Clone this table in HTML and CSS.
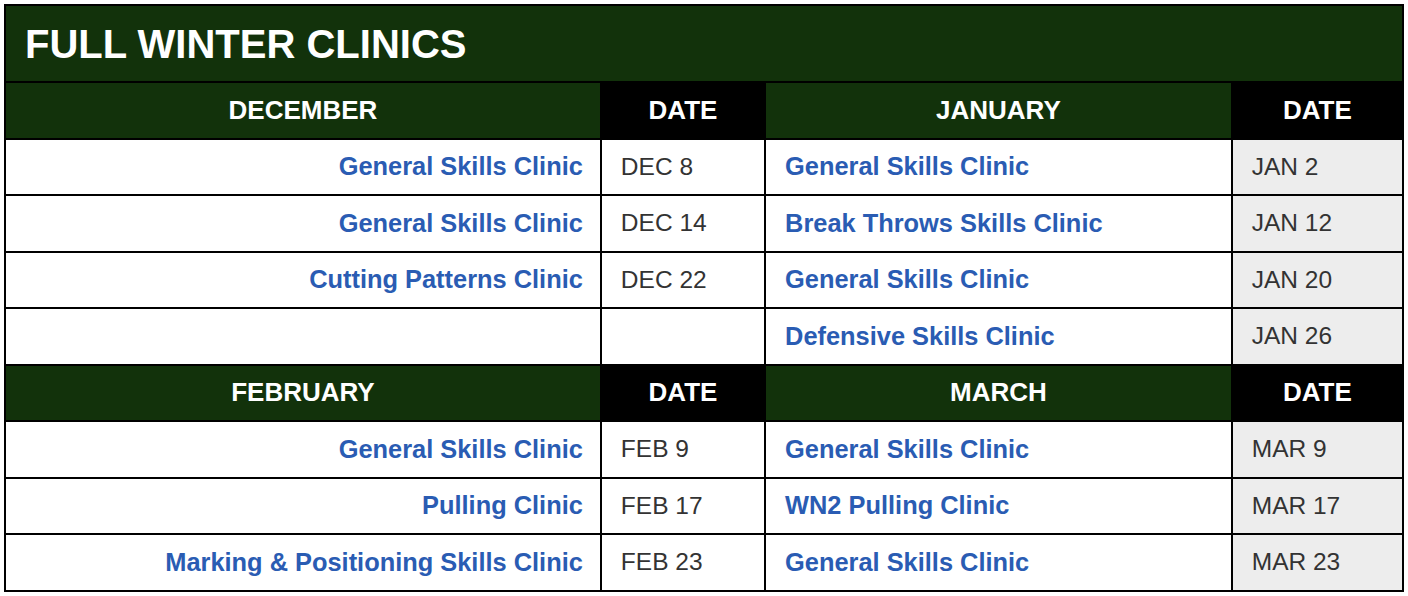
FILE: index.html
```html
<!DOCTYPE html>
<html lang="en">
<head>
<meta charset="utf-8">
<title>Full Winter Clinics</title>
<link rel="stylesheet" href="styles.css">
</head>
<body>
<table class="clinics">
  <colgroup>
    <col class="c-name-l">
    <col class="c-date-l">
    <col class="c-name-r">
    <col class="c-date-r">
  </colgroup>
  <tr class="title-row"><th colspan="4" class="title">FULL WINTER CLINICS</th></tr>
  <tr class="head-row">
    <th class="month">DECEMBER</th><th class="date-h">DATE</th>
    <th class="month">JANUARY</th><th class="date-h">DATE</th>
  </tr>
  <tr>
    <td class="name left"><a href="#">General Skills Clinic</a></td><td class="date">DEC 8</td>
    <td class="name right"><a href="#">General Skills Clinic</a></td><td class="date grey">JAN 2</td>
  </tr>
  <tr>
    <td class="name left"><a href="#">General Skills Clinic</a></td><td class="date">DEC 14</td>
    <td class="name right"><a href="#">Break Throws Skills Clinic</a></td><td class="date grey">JAN 12</td>
  </tr>
  <tr>
    <td class="name left"><a href="#">Cutting Patterns Clinic</a></td><td class="date">DEC 22</td>
    <td class="name right"><a href="#">General Skills Clinic</a></td><td class="date grey">JAN 20</td>
  </tr>
  <tr>
    <td class="name left"></td><td class="date"></td>
    <td class="name right"><a href="#">Defensive Skills Clinic</a></td><td class="date grey">JAN 26</td>
  </tr>
  <tr class="head-row">
    <th class="month">FEBRUARY</th><th class="date-h">DATE</th>
    <th class="month">MARCH</th><th class="date-h">DATE</th>
  </tr>
  <tr>
    <td class="name left"><a href="#">General Skills Clinic</a></td><td class="date">FEB 9</td>
    <td class="name right"><a href="#">General Skills Clinic</a></td><td class="date grey">MAR 9</td>
  </tr>
  <tr>
    <td class="name left"><a href="#">Pulling Clinic</a></td><td class="date">FEB 17</td>
    <td class="name right"><a href="#">WN2 Pulling Clinic</a></td><td class="date grey">MAR 17</td>
  </tr>
  <tr>
    <td class="name left"><a href="#">Marking &amp; Positioning Skills Clinic</a></td><td class="date">FEB 23</td>
    <td class="name right"><a href="#">General Skills Clinic</a></td><td class="date grey">MAR 23</td>
  </tr>
</table>
</body>
</html>
```

FILE: styles.css
```css
html, body {
  margin: 0;
  padding: 0;
  background: #ffffff;
}

body {
  padding: 4px;
  font-family: "Liberation Sans", Arial, Helvetica, sans-serif;
}

.clinics {
  width: 1400px;
  table-layout: fixed;
  border-collapse: separate;
  border-spacing: 0;
  border-top: 2px solid #000;
  border-left: 2px solid #000;
}

.c-name-l { width: 595px; }
.c-date-l { width: 164px; }
.c-name-r { width: 466px; }
.c-date-r { width: 171px; }

.clinics th,
.clinics td {
  box-sizing: border-box;
  border-right: 2px solid #000;
  border-bottom: 2px solid #000;
  padding: 0 19px;
  height: 56.5px;
  vertical-align: middle;
}

.title-row .title {
  height: 77px;
  background: #12320b;
  color: #ffffff;
  text-align: left;
  font-size: 40px;
  font-weight: 700;
  padding-left: 19px;
  padding-top: 2px;
}

.month {
  background: #12320b;
  color: #ffffff;
  font-size: 26px;
  font-weight: 700;
  text-align: center;
}

.date-h {
  background: #000000;
  color: #ffffff;
  font-size: 26px;
  font-weight: 700;
  text-align: center;
}

.name a {
  color: #2a5cb3;
  font-weight: 700;
  font-size: 25.4px;
  text-decoration: none;
}

.clinics .name.left {
  text-align: right;
  padding-right: 17px;
}

.name.right { text-align: left; }

.date {
  color: #333333;
  font-size: 24.5px;
  text-align: left;
  background: #ffffff;
}

.date.grey {
  background: #ededed;
}
```
